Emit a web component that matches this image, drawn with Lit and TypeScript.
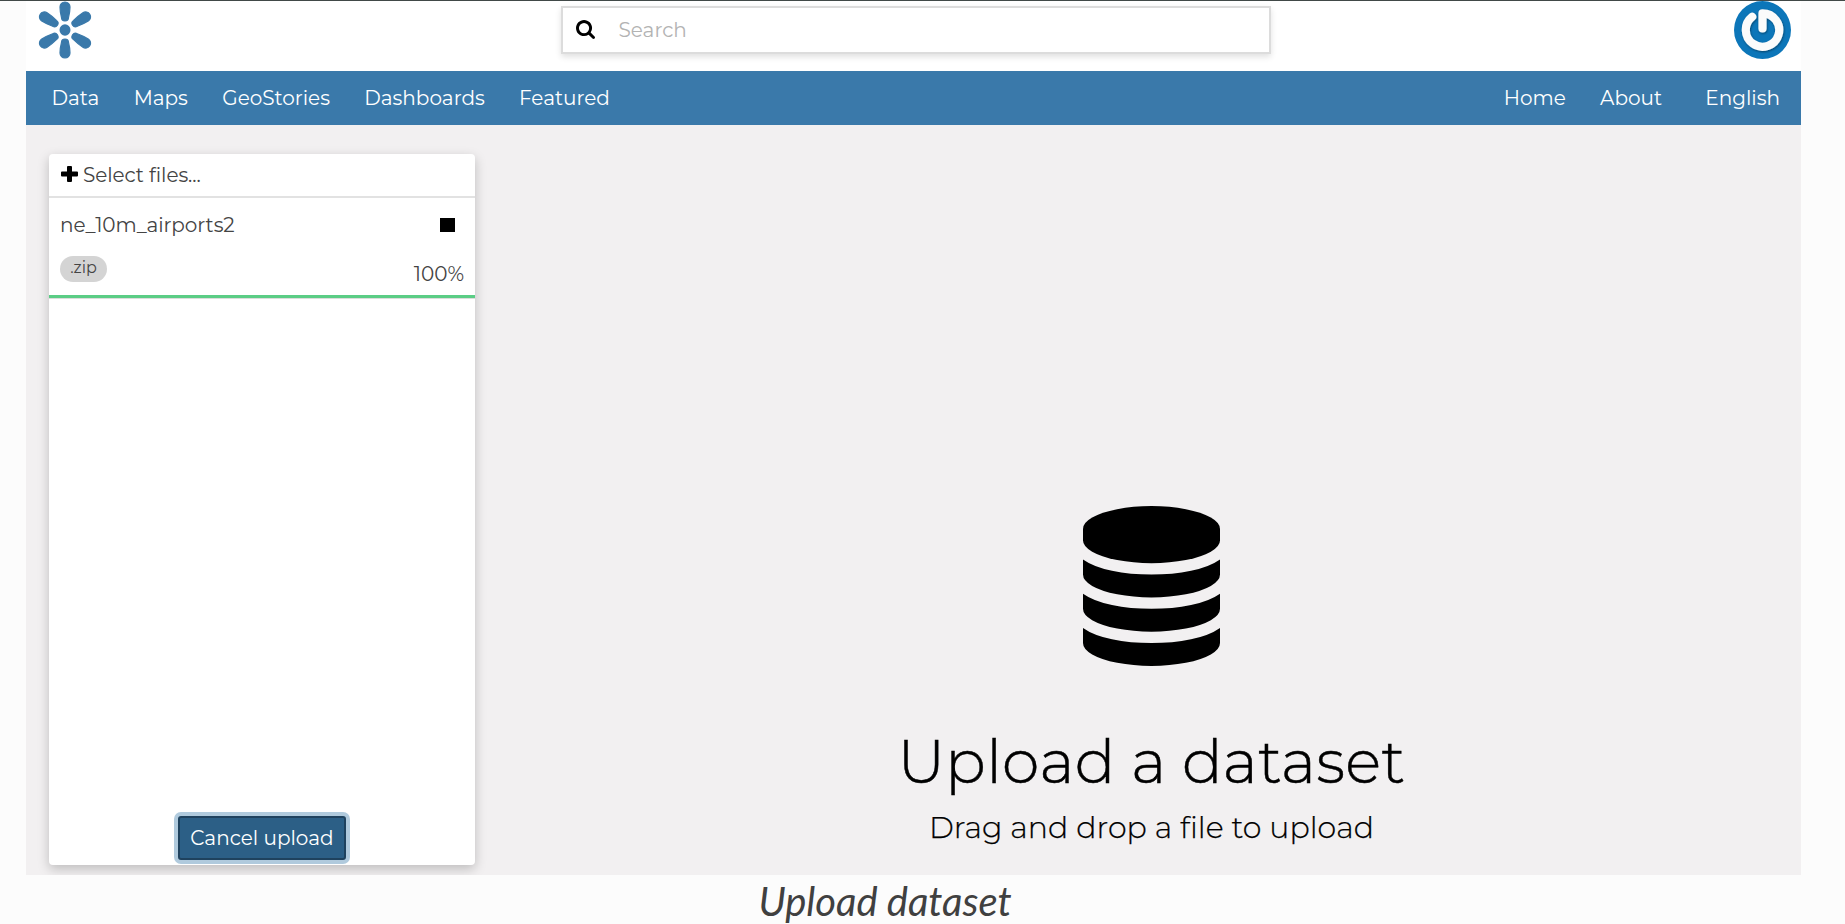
import { LitElement, html, css, svg } from "lit";
import { customElement } from "lit/decorators.js";

const LEFT_LINKS = ["Data", "Maps", "GeoStories", "Dashboards", "Featured"];

const disc = (dy: number) => svg`<path transform="translate(0 ${dy})"
  d="M768 768q237 0 443-43t325-127v170q0 69-103 128t-280 93.5-385 34.5-385-34.5-280-93.5-103-128v-170q119 84 325 127t443 43z"/>`;

// Outer lobe sits `reach` units from the logo's centre; the inner lobe is fixed at 12.4.
const petal = (angle: number, reach: number) => svg`<path transform="translate(27 29) rotate(${angle})"
  d="M-5 ${-reach}A5 5 0 0 1 5 ${-reach}Q5 ${-reach + 5} 3.500 -12.400A3.500 3.400 0 0 1 -3.500 -12.400Q-5 ${-reach + 5} -5 ${-reach}Z"
  stroke="#3a79aa" stroke-width="1.200" stroke-linejoin="round"/>`;

@customElement("site-header")
class SiteHeader extends LitElement {
  static styles = css`
    :host { display: block; background: #fff; }
    .top { display: grid; grid-template-columns: 535px 710px 1fr; height: 70px; align-items: start; }
    .logo { margin-left: 12px; width: 54px; height: 58px; fill: #3a79aa; overflow: visible; }
    .avatar { justify-self: end; margin-right: 10px; width: 57px; height: 58px; }
    .search {
      box-sizing: border-box; margin-top: 5px; height: 48px; border: 2px solid #dcdcdc;
      display: flex; align-items: center; gap: 23.5px; padding: 0 0 1px 13px;
      box-shadow: 0 3px 6px rgba(0, 0, 0, 0.12); color: #b3b3b3;
    }
    .search svg { width: 19px; height: 19px; }
    nav {
      box-sizing: border-box; height: 54px; background: #3a79aa; color: #fff;
      display: flex; align-items: center; padding: 0 21px 0 25.5px; gap: 34.3px;
    }
    .home { margin-left: auto; }
    .lang { margin-left: 9px; }
  `;
  render() {
    return html`
      <div class="top">
        <svg class="logo" viewBox="0 0 54 58">
          ${petal(0, 23)}${petal(180, 23)}
          ${[57.5, 122.5, 237.5, 302.5].map((a) => petal(a, 24.4))}
          <ellipse cx="27" cy="29" rx="5.500" ry="5.700" />
        </svg>
        <div class="search">
          <svg viewBox="0 0 1664 1664"><path d="M1152 704q0-185-131.500-316.500t-316.500-131.500-316.500 131.500-131.500 316.500 131.500 316.500 316.500 131.500 316.500-131.500 131.500-316.500zm512 832q0 52-38 90t-90 38q-54 0-90-38l-343-342q-179 124-399 124-143 0-273.500-55.500t-225-150-150-225-55.500-273.500 55.500-273.500 150-225 225-150 273.500-55.500 273.500 55.500 225 150 150 225 55.500 273.500q0 220-124 399l343 343q37 37 37 90z"/></svg>
          <span>Search</span>
        </div>
        <svg class="avatar" viewBox="0 0 57 58">
          <defs>
            <filter id="soft" x="-20%" y="-20%" width="140%" height="140%">
              <feDropShadow dx="0.6" dy="1" stdDeviation="0.9" flood-color="#000" flood-opacity="0.45" />
            </filter>
          </defs>
          <ellipse cx="28.500" cy="29" rx="28.500" ry="29" fill="#0c76b9" />
          <path d="M18.200 15.850A16.700 16.700 0 1 0 28.500 12.300V27.500" fill="none" stroke="#fbfbfb"
            stroke-width="8.200" stroke-linecap="round" stroke-linejoin="round" filter="url(#soft)" />
        </svg>
      </div>
      <nav>
        ${LEFT_LINKS.map((l) => html`<span>${l}</span>`)}
        <span class="home">Home</span><span>About</span><span class="lang">English</span>
      </nav>
    `;
  }
}

@customElement("upload-panel")
class UploadPanel extends LitElement {
  static styles = css`
    :host {
      display: flex; flex-direction: column; box-sizing: border-box; width: 426px; height: 711px;
      background: #fff; border-radius: 4px; color: #444;
      box-shadow: 0 4px 12px rgba(0, 0, 0, 0.22);
    }
    .select {
      display: flex; align-items: center; gap: 5px; height: 42px; padding: 0 12px;
      border-bottom: 2px solid #e2e2e2;
    }
    .select svg { width: 17px; height: 16px; fill: #000; margin-top: -2px; }
    .select span { letter-spacing: -0.07px; }
    .item { border-bottom: 1px solid #dcdcdc; }
    .row { display: flex; justify-content: space-between; align-items: center; padding: 0 11px; }
    .name { height: 54px; padding-right: 20px; letter-spacing: -0.05px; }
    .stop { width: 15px; height: 14px; background: #000; }
    .meta { height: 42.5px; }
    .meta > span:last-child { margin-top: 2px; }
    .ext {
      box-sizing: border-box; width: 47px; height: 26px; border-radius: 13px; background: #d4d4d4;
      font-size: 16px; line-height: 24px; text-align: center; margin-top: -8px;
    }
    .bar { height: 3px; background: #5bcd85; }
    .foot { margin: auto auto 5px; }
    button {
      box-sizing: border-box; width: 168px; height: 44px; padding: 0; display: block;
      font: inherit; color: #fff; background: #2c5f86; border: 2px solid #1f425e; border-radius: 3px;
      box-shadow: 0 0 0 4px #b0cadd;
    }
  `;
  render() {
    return html`
      <div class="select">
        <svg viewBox="0 0 17 16"><path d="M6 1q0-1 1-1h3q1 0 1 1v4.500h5q1 0 1 1v3q0 1-1 1h-5V15q0 1-1 1H7q-1 0-1-1v-4.500H1q-1 0-1-1v-3q0-1 1-1h5z"/></svg>
        <span>Select files...</span>
      </div>
      <div class="item">
        <div class="row name"><span>ne_10m_airports2</span><span class="stop"></span></div>
        <div class="row meta"><span class="ext">.zip</span><span>100%</span></div>
        <div class="bar"></div>
      </div>
      <div class="foot"><button>Cancel upload</button></div>
    `;
  }
}

@customElement("app-root")
class AppRoot extends LitElement {
  static styles = css`
    :host {
      display: block; box-sizing: border-box; height: 924px; overflow: hidden;
      background: #fcfcfc; border-top: 1px solid #414948;
      font: 400 20px/24px Montserrat, Inter, sans-serif;
    }
    .page { margin: 0 44px 0 26px; }
    .main {
      display: flex; height: 750px; box-sizing: border-box; padding: 29px 0 0 23px;
      background: #f2f0f1; overflow: hidden;
    }
    .drop {
      flex: 1; display: flex; flex-direction: column; align-items: center;
      padding: 352px 0 0 27px; color: #000;
    }
    .drop svg { width: 137px; height: 160px; }
    .title {
      font-size: 60px; font-weight: 300; line-height: 72px; margin-top: 60px;
      letter-spacing: 0.27px; -webkit-text-stroke: 0.5px #000;
    }
    .sub {
      font-size: 30px; font-weight: 300; line-height: 36px; margin-top: 12px;
      letter-spacing: 0.06px; -webkit-text-stroke: 0.25px #000;
    }
    .caption {
      font: italic 400 40px/48px Lato, sans-serif; color: #404040; letter-spacing: -0.05px;
      text-align: center; margin: 2px 75px 0 0; white-space: nowrap;
    }
  `;
  render() {
    return html`
      <div class="page">
        <site-header></site-header>
        <div class="main">
          <upload-panel></upload-panel>
          <div class="drop">
            <svg viewBox="0 0 1536 1792">
              ${[0, 384, 768].map(disc)}
              <path d="M768 0q208 0 385 34.500t280 93.500 103 128v128q0 69-103 128t-280 93.500-385 34.500-385-34.500-280-93.500-103-128v-128q0-69 103-128t280-93.500 385-34.500z"/>
            </svg>
            <div class="title">Upload a dataset</div>
            <div class="sub">Drag and drop a file to upload</div>
          </div>
        </div>
      </div>
      <div class="caption">Upload dataset</div>
    `;
  }
}
